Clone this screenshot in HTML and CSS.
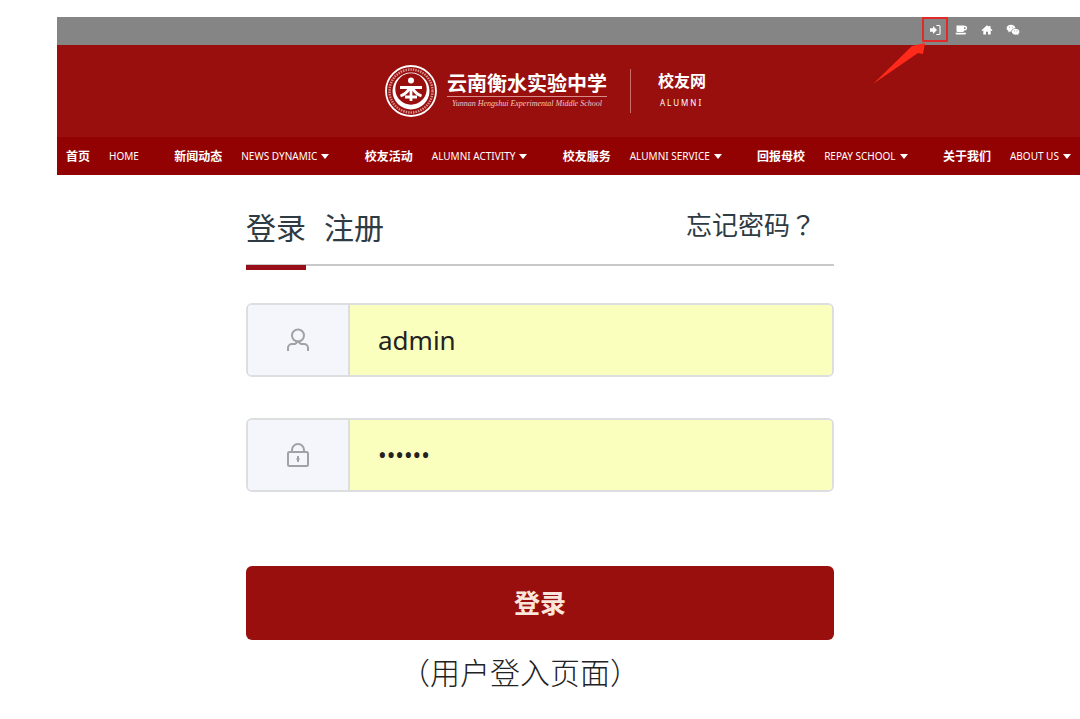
FILE: index.html
```html
<!DOCTYPE html>
<html lang="zh-CN">
<head>
<meta charset="utf-8">
<meta name="viewport" content="width=device-width, initial-scale=1">
<title>校友网 - 登录</title>
<link rel="stylesheet" href="styles.css">
</head>
<body>
<header class="site-header">
  <div class="toolbar">
    <a class="tool tool-current" href="#login" aria-label="登录">
      <svg class="tool-icon" viewBox="0 0 12 12"><path d="M1 4.3h3V2l4 4-4 4V7.7H1z" fill="currentColor"/><path d="M7.4 1.5H10a1 1 0 0 1 1 1v7a1 1 0 0 1-1 1H7.4" fill="none" stroke="currentColor" stroke-width="1.1"/></svg>
      <svg class="pointer" viewBox="0 0 54 44" aria-hidden="true"><path d="M1 42 40 4 53 1 51 12 46 11z" fill="#ff2a1a"/></svg>
    </a>
    <a class="tool" href="#cafe" aria-label="咖啡">
      <svg class="tool-icon" viewBox="0 0 12 12"><path d="M1.500 1.500H9v5.200A1.300 1.300 0 0 1 7.700 8H2.800a1.300 1.300 0 0 1-1.300-1.300zM.3 8.700h11L10.300 10.500H1.300z" fill="currentColor"/><path d="M9 2.500h.8a1.600 1.600 0 0 1 0 3.200H9" fill="none" stroke="currentColor" stroke-width="1.400"/></svg>
    </a>
    <a class="tool" href="#home" aria-label="主页">
      <svg class="tool-icon" viewBox="0 0 12 12"><path d="M6 1.200 7.800 2.800V2h1.700v2.300L11.500 6.200l-.8.800-1-.8v4.300H7V7.800H5v2.700H2.300V6.200l-1 .8-.8-.8z" fill="currentColor"/></svg>
    </a>
    <a class="tool" href="#wechat" aria-label="微信">
      <svg class="tool-icon tool-icon-wide" viewBox="0 0 14 12"><path d="M5 .8c2.400 0 4.300 1.500 4.400 3.400-2.400 0-4.200 1.500-4.200 3.500l-1.200-.2-1.800 1 .4-1.500C1.400 6.300.6 5.300.6 4.200.6 2.300 2.600.800 5 .800z" fill="currentColor"/><path d="M9.600 4.800c2.100 0 3.800 1.300 3.800 3 0 .9-.5 1.700-1.300 2.200l.3 1.300-1.500-.7c-2.700.6-5.100-.8-5.100-2.800 0-1.700 1.700-3 3.800-3z" fill="currentColor"/><path d="M3.400 3.200h.1M6.500 3.200h.1M8.400 7h.1M10.900 7h.1" stroke="#858585" stroke-width=".8" stroke-linecap="round"/></svg>
    </a>
  </div>
  <div class="brand">
    <svg class="crest" viewBox="0 0 52 52" role="img" aria-label="校徽">
      <circle cx="26" cy="26" r="25" fill="none" stroke="#fff" stroke-width="1.800"/>
      <circle cx="26" cy="26" r="21.500" fill="none" stroke="#d98c8a" stroke-width="2.500" stroke-dasharray="1.500 1"/>
      <circle cx="26" cy="26" r="18.500" fill="#fff"/>
      <circle cx="26" cy="24" r="15.700" fill="#980f0e"/>
      <circle cx="26" cy="15.500" r="3" fill="#fff"/>
      <path d="M15 22.500h22M26 21v15M24.500 23c-2 4-5 6.500-9 8M27.500 23c2 4 5 6.500 9 8M20 32h12" fill="none" stroke="#fff" stroke-width="2.800"/>
    </svg>
    <div class="school">
      <div class="school-cn">云南衡水实验中学</div>
      <div class="school-en">Yunnan Hengshui Experimental Middle School</div>
    </div>
    <div class="site">
      <div class="site-cn">校友网</div>
      <div class="site-en">ALUMNI</div>
    </div>
  </div>
  <nav class="nav">
    <a class="nav-item" href="#"><b>首页</b><span>HOME</span></a>
    <a class="nav-item has-menu" href="#news"><b>新闻动态</b><span>NEWS DYNAMIC</span></a>
    <a class="nav-item has-menu" href="#activity"><b>校友活动</b><span>ALUMNI ACTIVITY</span></a>
    <a class="nav-item has-menu" href="#service"><b>校友服务</b><span>ALUMNI SERVICE</span></a>
    <a class="nav-item has-menu" href="#repay"><b>回报母校</b><span>REPAY SCHOOL</span></a>
    <a class="nav-item has-menu" href="#about"><b>关于我们</b><span>ABOUT US</span></a>
  </nav>
</header>
<main class="login" id="login">
  <div class="tabs">
    <a class="tab tab-active" href="#login">登录</a>
    <a class="tab" href="#register">注册</a>
    <a class="forgot" href="#forgot">忘记密码<span class="mark" lang="zh-TW">？</span></a>
  </div>
  <form class="form">
    <div class="field">
      <label class="field-icon" for="user" aria-label="用户名">
        <svg class="glyph" viewBox="0 0 24 26"><circle cx="12" cy="8.500" r="6"/><path d="M2 24v-3a4 4 0 0 1 4-4h3l3-2.500 3 2.500h3a4 4 0 0 1 4 4v3"/></svg>
      </label>
      <input class="field-input" id="user" type="text" value="admin">
    </div>
    <div class="field">
      <label class="field-icon" for="pass" aria-label="密码">
        <svg class="glyph" viewBox="0 0 24 26"><rect x="2" y="10" width="20" height="14" rx="1.500"/><path d="M6 10V8a6 6 0 0 1 12 0v2M12 14v6M10.500 17h3"/></svg>
      </label>
      <input class="field-input field-secret" id="pass" type="password" value="123456">
    </div>
    <button class="submit" type="button">登录</button>
  </form>
  <p class="caption">（用户登入页面）</p>
</main>
</body>
</html>
```

FILE: styles.css
```css
* { box-sizing: border-box; }

body {
  margin: 0;
  background: #fff;
  color: #2f3b42;
  font-family: "Noto Sans", "Noto Sans CJK SC", sans-serif;
}

a { color: inherit; text-decoration: none; }

.site-header { padding: 17px 0 0 57px; color: #fff; }

.toolbar {
  display: flex;
  justify-content: flex-end;
  height: 28px;
  padding-right: 54px;
  background: #858585;
}

.tool {
  position: relative;
  display: flex;
  align-items: center;
  justify-content: center;
  width: 26px;
  height: 25px;
}

.tool-current { border: 2px solid #e02a2a; }
.tool-icon { width: 12px; height: 12px; }
.tool-icon-wide { width: 14px; }

.pointer {
  position: absolute;
  top: 23px;
  right: 20px;
  width: 54px;
  height: 44px;
}

.brand {
  display: flex;
  align-items: center;
  justify-content: center;
  height: 92px;
  padding-right: 46px;
  background: #980f0e;
}

.crest { width: 52px; height: 52px; margin-right: 10px; }

.school-cn {
  border-bottom: 1px solid #d98c8a;
  font-size: 20px;
  font-weight: 700;
  line-height: 24px;
}

.school-en {
  color: #efc9c7;
  font: italic 8px/14px "Liberation Serif", serif;
  text-align: center;
  white-space: nowrap;
}

.site {
  margin-left: 23px;
  padding-left: 27px;
  border-left: 1px solid #c9706e;
}

.site-cn { font-size: 16px; font-weight: 700; line-height: 24px; }
.site-en { padding-left: 2px; font-size: 8px; line-height: 20px; letter-spacing: 2px; }

.nav {
  display: flex;
  align-items: center;
  justify-content: space-between;
  height: 38px;
  padding: 0 9px;
  background: #930202;
}

.nav-item {
  display: flex;
  align-items: center;
  gap: 19px;
  font-size: 10px;
  white-space: nowrap;
}

.nav-item b { font-size: 12px; }

.has-menu span::after {
  content: "";
  display: inline-block;
  margin-left: 4px;
  border: 4px solid transparent;
  border-top: 5px solid #fff;
  border-bottom: 0;
  vertical-align: 1px;
}

.login {
  max-width: 588px;
  margin: 0 auto;
  padding-top: 28px;
}

.tabs {
  display: flex;
  align-items: flex-start;
  gap: 18px;
  height: 63px;
  border-bottom: 2px solid #c9c9c9;
}

.tab {
  height: 67px;
  font-size: 30px;
  line-height: 50px;
}

.tab-active { border-bottom: 5px solid #980f1a; }

.forgot {
  margin-left: auto;
  padding-right: 18px;
  font-size: 26px;
  line-height: 42px;
}

.mark { font-family: "Noto Sans CJK TC", sans-serif; }

.form { padding-top: 37px; }

.field {
  display: flex;
  height: 74px;
  margin-bottom: 41px;
  overflow: hidden;
  border: 2px solid #dcdee0;
  border-radius: 6px;
}

.field-icon {
  display: flex;
  align-items: center;
  justify-content: center;
  width: 102px;
  border-right: 2px solid #dcdee0;
  background: #f5f6fb;
}

.glyph {
  width: 24px;
  height: 26px;
  fill: none;
  stroke: #a0a2a5;
  stroke-width: 2;
}

.field-input {
  flex: 1;
  min-width: 0;
  padding: 0 28px;
  border: 0;
  outline: 0;
  background: #faffbd;
  color: #222;
  font: 26px "Noto Sans", sans-serif;
}

.field-secret { font-size: 23px; }

.submit {
  display: block;
  width: 100%;
  height: 74px;
  margin-top: 74px;
  padding-bottom: 5px;
  border: 0;
  border-radius: 6px;
  background: #980f0e;
  color: #fbe6dc;
  font: 700 26px "Noto Sans CJK SC", sans-serif;
}

.caption {
  margin: 12px 0 0;
  padding-right: 40px;
  color: #222;
  font: 300 30px/38px "Noto Sans CJK SC", sans-serif;
  text-align: center;
}
```
